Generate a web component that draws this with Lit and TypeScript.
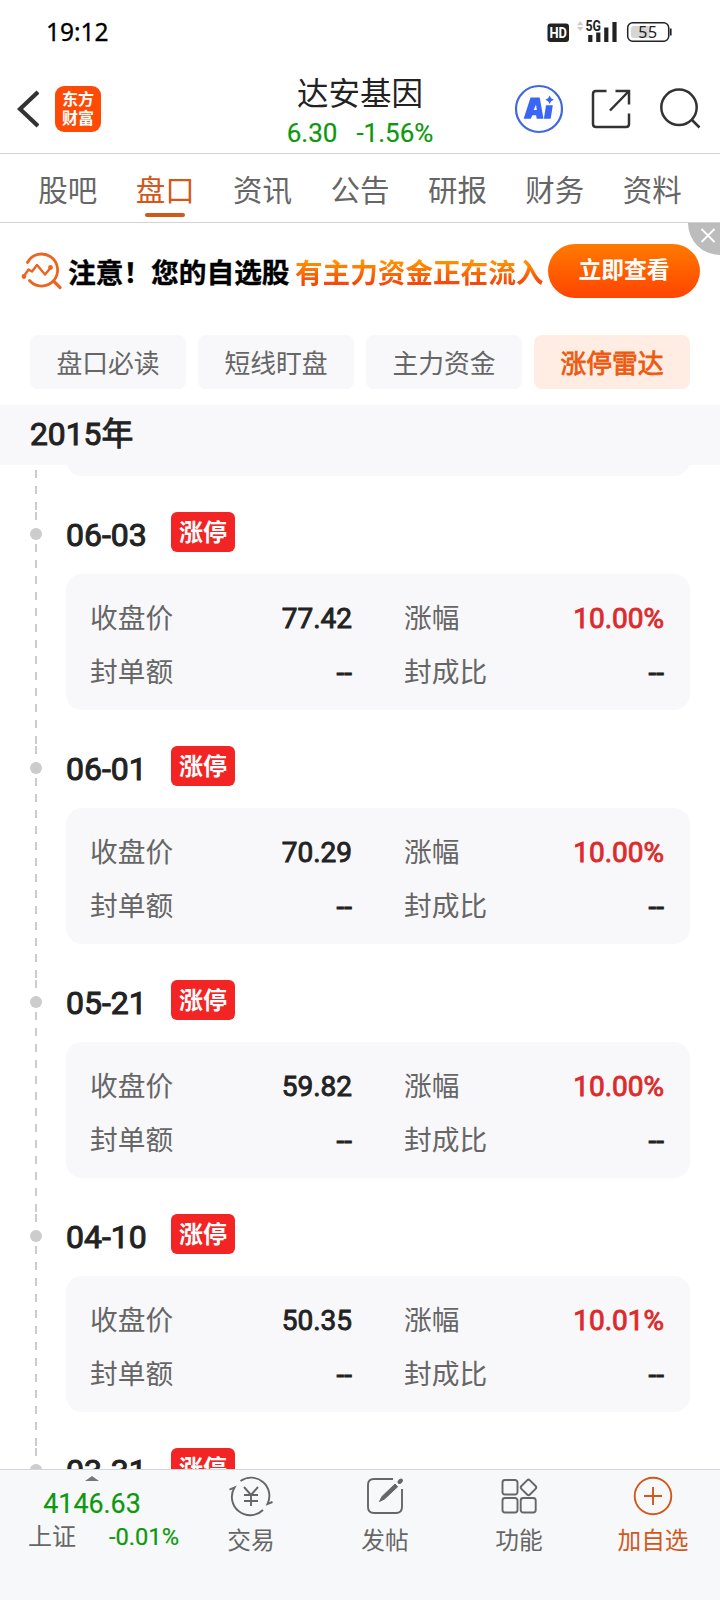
import { LitElement, html, css, svg, nothing } from "lit";
import { customElement, property } from "lit/decorators.js";
import { classMap } from "lit/directives/class-map.js";

interface LimitUp {
  date: string;
  close?: string;
  change?: string;
}

const TABS = ["股吧", "盘口", "资讯", "公告", "研报", "财务", "资料"];
const CHIPS = ["盘口必读", "短线盯盘", "主力资金", "涨停雷达"];
const ENTRIES: LimitUp[] = [
  { date: "06-03", close: "77.42", change: "10.00%" },
  { date: "06-01", close: "70.29", change: "10.00%" },
  { date: "05-21", close: "59.82", change: "10.00%" },
  { date: "04-10", close: "50.35", change: "10.01%" },
  { date: "03-31" },
];

@customElement("status-bar")
class StatusBar extends LitElement {
  static styles = css`
    :host {
      display: flex;
      align-items: center;
      justify-content: space-between;
      height: 64px;
      padding: 0 48px 0 46px;
      box-sizing: border-box;
      font-family: "Noto Sans", sans-serif;
    }
    .time {
      font-size: 24.5px;
      line-height: 64px;
      color: #000;
      -webkit-text-stroke: 0.3px #000;
    }
    svg {
      display: block;
    }
    .hd { font: 700 15px Roboto, sans-serif; fill: #fff; }
    .net { font: 700 14px Roboto, sans-serif; fill: #222; }
    .level { font: 400 16px "Noto Sans", sans-serif; fill: #222; letter-spacing: 0.6px; }
  `;
  render() {
    return html`
      <span class="time">19:12</span>
      <svg width="126" height="64" viewBox="546 0 126 64">
        <rect x="547.5" y="23.5" width="21.5" height="18.5" rx="3" fill="#222" />
        <text class="hd" x="549.5" y="38.2" textLength="17.5" lengthAdjust="spacingAndGlyphs">HD</text>
        <path d="M577 25.2l3.2-4.2 3.2 4.2zM577 27l3.2 4 3.2-4z" fill="#ccc" />
        <text class="net" x="585.5" y="31" textLength="15.5" lengthAdjust="spacingAndGlyphs">5G</text>
        <path d="M590.3 35v7M598.3 32.5v9.5M606.3 27.5v14.5M614.5 22v20" stroke="#222" stroke-width="4.2" />
        <rect x="627.7" y="22.8" width="41" height="18.4" rx="5" fill="none" stroke="#222" stroke-width="1.5" />
        <rect x="631" y="26" width="19" height="12" rx="2.5" fill="#d6d6d6" />
        <path d="M670.7 28.5v7" stroke="#222" stroke-width="1.8" />
        <text class="level" x="638.2" y="37.9">55</text>
      </svg>
    `;
  }
}

@customElement("stock-header")
class StockHeader extends LitElement {
  static styles = css`
    :host {
      display: grid;
      grid-template-columns: 240px 240px 240px;
      height: 90px;
      box-sizing: border-box;
      border-bottom: 1px solid #d4d4d4;
    }
    .left {
      display: flex;
      align-items: center;
      gap: 16px;
      padding: 1px 0 0 17px;
    }
    .logo {
      display: grid;
      place-content: center;
      width: 46px;
      height: 46px;
      border-radius: 9px;
      background: #fd4a05;
      color: #fff;
      font-size: 16px;
      font-weight: 700;
      line-height: 19px;
    }
    .mid {
      display: flex;
      flex-direction: column;
      align-items: center;
      padding-top: 11px;
    }
    .name {
      font-size: 31.5px;
      line-height: 40px;
      color: #222;
    }
    .quote {
      display: flex;
      gap: 19px;
      font-size: 26px;
      line-height: 36px;
      color: #0d980d;
      -webkit-text-stroke: 0.2px #0d980d;
    }
    svg {
      display: block;
    }
  `;
  render() {
    return html`
      <div class="left">
        <svg width="22" height="38" viewBox="17 90 22 38">
          <path d="M38 92L20 109 38 126" fill="none" stroke="#333" stroke-width="4.2" />
        </svg>
        <div class="logo"><span>东方</span><span>财富</span></div>
      </div>
      <div class="mid">
        <div class="name">达安基因</div>
        <div class="quote"><span>6.30</span><span>-1.56%</span></div>
      </div>
      <svg width="240" height="89" viewBox="480 64 240 89" fill="none" stroke="#333" stroke-width="2.5">
        <circle cx="539" cy="109" r="23" stroke="#3f68e0" stroke-width="2.2" />
        <path
          d="M530.5 97.500h9.200l3.800 21.200h-6.800l-.6-3.500h-3.600l-1.800 3.500h-7zM536 104.500l-2.300 5.500h3.100zM546 105.300h6.800l-2.100 13.500h-6.800z"
          fill="#3a66f5" fill-rule="evenodd" stroke="none" />
        <path d="M549.600 95.400l1.500 2.800 2.800 1.500-2.800 1.500-1.500 2.800-1.500-2.800-2.800-1.500 2.800-1.500z" fill="#3a66f5" stroke="none" />
        <path d="M606.500 91H596q-3 0-3 3v30q0 3 3 3h30q3 0 3-3v-10.500M615.500 91H629v13.500M629 91L610 110.500" />
        <circle cx="679" cy="107.300" r="17.700" />
        <path d="M691.500 119.500L699.500 127.500" />
      </svg>
    `;
  }
}

@customElement("stock-tabs")
class StockTabs extends LitElement {
  static styles = css`
    :host {
      display: grid;
      grid-template-columns: repeat(7, 1fr);
      height: 69px;
      box-sizing: border-box;
      padding: 0 19px;
      border-bottom: 1px solid #d4d4d4;
    }
    .tab {
      display: flex;
      flex-direction: column;
      align-items: center;
      font-size: 29.5px;
      line-height: 52px;
      padding-top: 11px;
      color: #666;
    }
    .tab span {
      height: 48px;
    }
    .on {
      color: #d4571a;
    }
    .on::after {
      content: "";
      width: 40px;
      height: 4px;
      border-radius: 2px;
      background: #d4571a;
    }
  `;
  render() {
    return TABS.map(
      (t, i) => html`<div class=${classMap({ tab: true, on: i === 1 })}><span>${t}</span></div>`
    );
  }
}

@customElement("promo-banner")
class PromoBanner extends LitElement {
  static styles = css`
    :host {
      display: flex;
      align-items: center;
      position: relative;
      height: 112px;
      box-sizing: border-box;
      padding: 0 20px 16px 21px;
      font-weight: 700;
      white-space: nowrap;
    }
    .icon {
      display: block;
      margin-right: 4px;
    }
    .text {
      font-size: 27.7px;
      color: #000;
      width: 227px;
      -webkit-text-stroke: 0.4px #000;
    }
    .hot {
      font-size: 27.6px;
      width: 253px;
      background: linear-gradient(#ff9500 25%, #f5480a 80%);
      -webkit-background-clip: text;
      background-clip: text;
      color: transparent;
    }
    .go {
      flex: none;
      width: 152px;
      height: 54px;
      margin-left: auto;
      border-radius: 27px;
      background: linear-gradient(#ff7a00, #ff4400);
      color: #fff;
      font-size: 22.8px;
      line-height: 54px;
      text-align: center;
    }
    .close {
      position: absolute;
      top: 0;
      right: 0;
      width: 32px;
      height: 32px;
      border-bottom-left-radius: 32px;
      background: #bcbcbc;
    }
  `;
  render() {
    return html`
      <svg class="icon" width="43" height="42" viewBox="21 250 43 42" fill="none" stroke="#ec6420" stroke-width="2.8"
        stroke-linecap="round" stroke-linejoin="round">
        <path d="M27.5 262.5A16 16 0 1 1 29.5 280.500" />
        <path d="M54 281.5l6 6" stroke-width="3.2" />
        <path d="M24 276l4.500-6.500 3.500 2 5-6.500 8 9.500 5.500-6.500" stroke-width="2.400" />
        <circle cx="24" cy="276.500" r="1" /><circle cx="50.500" cy="267.500" r="1" />
      </svg>
      <span class="text">注意！您的自选股</span>
      <span class="hot">有主力资金正在流入</span>
      <span class="go">立即查看</span>
      <svg class="close" viewBox="0 0 32 32">
        <path d="M13.500 6l13 13M26.500 6l-13 13" stroke="#fff" stroke-width="1.800" />
      </svg>
    `;
  }
}

@customElement("section-chips")
class SectionChips extends LitElement {
  static styles = css`
    :host {
      display: grid;
      grid-template-columns: repeat(4, 1fr);
      gap: 12px;
      padding: 0 30px 16px;
    }
    .chip {
      height: 54px;
      border-radius: 8px;
      background: #f8f8fb;
      color: #666;
      font-size: 25.8px;
      line-height: 58px;
      text-align: center;
    }
    .on {
      background: #ffede4;
      color: #ec5a10;
      -webkit-text-stroke: 0.8px #ec5a10;
    }
  `;
  render() {
    return CHIPS.map((c, i) => html`<div class=${classMap({ chip: true, on: i === 3 })}>${c}</div>`);
  }
}

@customElement("limit-entry")
class LimitEntry extends LitElement {
  @property({ attribute: false }) item!: LimitUp;
  static styles = css`
    :host {
      display: grid;
      grid-template-columns: 12px 624px;
      column-gap: 24px;
      height: 234px;
      padding: 0 30px;
      flex: none;
    }
    .rail {
      background: repeating-linear-gradient(#ccc 0 8px, transparent 8px 16px) center / 2px 100% no-repeat;
      padding-top: 16px;
    }
    .dot {
      width: 12px;
      height: 12px;
      border-radius: 50%;
      background: #ccc;
    }
    .head {
      display: flex;
      height: 40px;
      margin-bottom: 22px;
    }
    .date {
      width: 105px;
      font-size: 32px;
      line-height: 46px;
      color: #222;
      -webkit-text-stroke: 1px #222;
    }
    .tag {
      width: 64px;
      height: 40px;
      border-radius: 6px;
      background: #f22424;
      color: #fff;
      font-size: 24px;
      font-weight: 700;
      line-height: 42px;
      text-align: center;
    }
    .card {
      display: grid;
      grid-template-columns: 262px 260px;
      column-gap: 52px;
      grid-auto-rows: 54px;
      height: 136px;
      box-sizing: border-box;
      padding: 18px 24px 0;
      border-radius: 16px;
      background: #f8f8fb;
    }
    .cell {
      display: flex;
      justify-content: space-between;
      font-size: 27.7px;
      line-height: 54px;
      color: #666;
    }
    .value {
      font-size: 28px;
      color: #222;
      -webkit-text-stroke: 0.9px #222;
    }
    .up {
      color: #dc2b2b;
      -webkit-text-stroke-color: #dc2b2b;
    }
  `;
  render() {
    const { date, close, change } = this.item;
    return html`
      <div class="rail"><div class="dot"></div></div>
      <div>
        <div class="head"><span class="date">${date}</span><span class="tag">涨停</span></div>
        ${close
          ? html`<div class="card">
              <div class="cell"><span>收盘价</span><span class="value">${close}</span></div>
              <div class="cell"><span>涨幅</span><span class="value up">${change}</span></div>
              <div class="cell"><span>封单额</span><span class="value">--</span></div>
              <div class="cell"><span>封成比</span><span class="value">--</span></div>
            </div>`
          : nothing}
      </div>
    `;
  }
}

@customElement("bottom-bar")
class BottomBar extends LitElement {
  static styles = css`
    :host {
      display: grid;
      grid-template-columns: 184px repeat(4, 134px);
      height: 131px;
      box-sizing: border-box;
      border-top: 1px solid #d2d6d8;
      background: #f7f8fa;
      color: #666;
      font-size: 24px;
    }
    .index {
      display: flex;
      flex-direction: column;
      align-items: center;
    }
    .arrow {
      margin-top: 6px;
      border: 7px solid transparent;
      border-top: 0;
      border-bottom: 5px solid #777;
    }
    .points {
      font-size: 26.8px;
      line-height: 32px;
      margin-top: 7px;
      color: #0d980d;
      -webkit-text-stroke: 0.2px #0d980d;
    }
    .row {
      display: flex;
      justify-content: space-between;
      width: 151px;
      line-height: 34px;
      margin-right: 5px;
      align-self: flex-end;
    }
    .down {
      font-size: 23.7px;
      color: #0d980d;
      -webkit-text-stroke: 0.2px #0d980d;
    }
    .item {
      display: flex;
      flex-direction: column;
      align-items: center;
      line-height: 34px;
      gap: 6px;
      padding-top: 4px;
    }
    .item svg {
      display: block;
      fill: none;
      stroke: currentColor;
      stroke-width: 1.9;
    }
    .item span {
      font-size: 23.7px;
    }
    .add {
      color: #d4571a;
    }
  `;
  render() {
    const icon = (body: unknown) => html`<svg width="44" height="44" viewBox="-22 -22 44 44">${body}</svg>`;
    return html`
      <div class="index">
        <i class="arrow"></i>
        <span class="points">4146.63</span>
        <div class="row"><span>上证</span><span class="down">-0.01%</span></div>
      </div>
      <div class="item">
        ${icon(svg`<path d="M-10.5-15A18.3 18.3 0 0 1 16.5 8l5-2M12 14A18.3 18.3 0 0 1-16.500-8.500l-5 2.200M-7-9L0-1 7-9M-7-1H7M-7 5H7M0-1V10" />`)}
        <span>交易</span>
      </div>
      <div class="item">
        ${icon(svg`<path d="M8-17H-11q-6 0-6 6V11q0 6 6 6H11q6 0 6-6V-7" />
          <path d="M-5.500 5.500L-3 .500 10-12 12.700-9.300-.500 3z" fill="currentColor" stroke-width="1" />
          <path d="M14.500-14L16-15.500" stroke-width="4" stroke-linecap="round" />`)}
        <span>发帖</span>
      </div>
      <div class="item">
        ${icon(svg`<rect x="-16.500" y="-16" width="15" height="14.500" rx="2.500" />
          <rect x="-16.500" y="2" width="15" height="14.500" rx="2.500" />
          <rect x="1.700" y="2" width="15" height="14.500" rx="2.500" />
          <rect x="3.500" y="-14.600" width="12" height="12" rx="2" transform="rotate(45 9.500 -8.600)" />`)}
        <span>功能</span>
      </div>
      <div class="item add">
        ${icon(svg`<circle r="18.300" /><path d="M-9 0H9M0-9V9" />`)}
        <span>加自选</span>
      </div>
    `;
  }
}

@customElement("app-root")
class AppRoot extends LitElement {
  static styles = css`
    :host {
      display: flex;
      flex-direction: column;
      width: 720px;
      height: 1600px;
      overflow: hidden;
      background: #fff;
      font-family: Roboto, "Noto Sans CJK SC", sans-serif;
    }
    .year {
      height: 60px;
      padding-left: 30px;
      background: #f8f8fb;
      color: #222;
      font-size: 31.8px;
      line-height: 59px;
      -webkit-text-stroke: 1px #222;
    }
    .list {
      flex: 1;
      min-height: 0;
      display: flex;
      flex-direction: column;
      overflow: hidden;
    }
    .tail {
      flex: none;
      display: grid;
      grid-template-columns: 12px 624px;
      column-gap: 24px;
      padding: 0 30px;
      height: 47px;
    }
    .rail {
      margin-top: 5px;
      background: repeating-linear-gradient(#ccc 0 8px, transparent 8px 16px) center / 2px 100% no-repeat;
    }
    .edge {
      height: 11px;
      overflow: hidden;
      display: flex;
      align-items: flex-end;
    }
    .edge::after {
      content: "";
      flex: 1;
      height: 40px;
      border-radius: 16px;
      background: #f8f8fb;
    }
  `;
  render() {
    return html`
      <status-bar></status-bar>
      <stock-header></stock-header>
      <stock-tabs></stock-tabs>
      <promo-banner></promo-banner>
      <section-chips></section-chips>
      <div class="year">2015年</div>
      <div class="list">
        <div class="tail"><div class="rail"></div><div class="edge"></div></div>
        ${ENTRIES.map((e) => html`<limit-entry .item=${e}></limit-entry>`)}
      </div>
      <bottom-bar></bottom-bar>
    `;
  }
}
